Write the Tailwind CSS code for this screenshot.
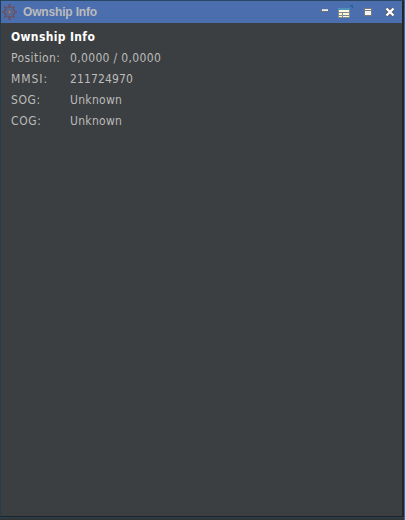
<!DOCTYPE html>
<html lang="en">
<head>
<meta charset="utf-8">
<title>Ownship Info</title>
<script src="https://cdn.jsdelivr.net/npm/@tailwindcss/browser@4"></script>
</head>
<body class="h-[520px] w-[405px] overflow-hidden bg-[#3c3f41]">
<div class="flex h-[520px] w-[405px] flex-col border-r border-[#1777b7] bg-[#3c3f41]">
  <main class="flex h-[517px] flex-col border border-r-2 border-t-[#294663] border-r-[#222629] border-b-[#1f2224] border-l-[#263d50]">
    <header class="flex h-[22px] shrink-0 items-center bg-[#4b6eaf]">
      <svg class="ml-px shrink-0" width="16" height="16" viewBox="0 0 16 16" fill="none" shape-rendering="crispEdges">
        <path d="M7.5 0v16M0 8h15M2.5 3l10 10M12.5 3l-10 10" stroke="#596581"/>
        <circle cx="7.5" cy="8" r="5" stroke="#66546b" stroke-width="1.6"/>
        <circle cx="7.5" cy="8" r="2" fill="#6d6673"/>
        <path d="M7 7h1v2h-1z" fill="#a28a80"/>
        <path d="M6 0h3v2H6zM6 14h3v2H6zM0 7h2v2H0zM13 7h2v2h-2zM2 2h2v2H2zM11 2h2v2h-2zM2 12h2v2H2zM11 12h2v2h-2z" fill="#64566f"/>
      </svg>
      <h1 class="ml-[5px] pt-px font-['Liberation_Sans',Arial,sans-serif] text-[12px] leading-[21px] font-bold tracking-[-0.17px] text-[#bbbbbb]">Ownship Info</h1>
      <svg class="mr-px ml-auto shrink-0" width="82" height="22" viewBox="319 1 82 22" shape-rendering="crispEdges">
        <path d="M321 9h7v3h-7z" fill="#697079"/><path d="M322 10h6v1h-6z" fill="#eeeeee"/><path d="M322 9h6v1h-6z" fill="#d0d0d0"/>
        <path d="M338 8h12v10h-12z" fill="#7d8b91"/>
        <path d="M338 8h12v2h-12z" fill="#4b91b9"/>
        <path d="M339 10h10v2h-10zM339 13h3v2h-3zM343 13h6v2h-6zM339 16h3v1h-3zM343 16h6v1h-6z" fill="#fff8dc"/>
        <path d="M350 5h3v3h-1v-1h-1v-1h-1z" fill="#176695"/>
        <path d="M364 8h8v8h-8z" fill="#777a80"/><path d="M365 9h6v1h-6zM365 11h6v4h-6z" fill="#f4f4f4"/>
        <path d="M386.5 8.5l7 7M393.5 8.5l-7 7" stroke="#565b64" stroke-width="4" shape-rendering="auto"/>
        <path d="M386.5 8.5l7 7M393.5 8.5l-7 7" stroke="#fff" stroke-width="2.4" shape-rendering="auto"/>
      </svg>
    </header>
    <section class="px-[10px] pt-[4px] font-['DejaVu_Sans_Condensed','DejaVu_Sans',Tahoma,sans-serif] text-[12px] leading-[21px] text-[#bbbbbb] [font-stretch:condensed]">
      <h2 class="font-bold tracking-[0.35px] text-white">Ownship Info</h2>
      <dl class="grid grid-cols-[59px_1fr]">
        <dt class="tracking-[0.42px]">Position:</dt><dd class="tracking-[0.34px]">0,0000 / 0,0000</dd>
        <dt class="tracking-[0.95px]">MMSI:</dt><dd class="tracking-[0.12px]">211724970</dd>
        <dt class="tracking-[0.6px]">SOG:</dt><dd class="tracking-[0.3px]">Unknown</dd>
        <dt class="tracking-[0.6px]">COG:</dt><dd class="tracking-[0.3px]">Unknown</dd>
      </dl>
    </section>
  </main>
  <footer class="h-[3px] border-t border-[#294155] bg-[#303538]"></footer>
</div>
</body>
</html>
